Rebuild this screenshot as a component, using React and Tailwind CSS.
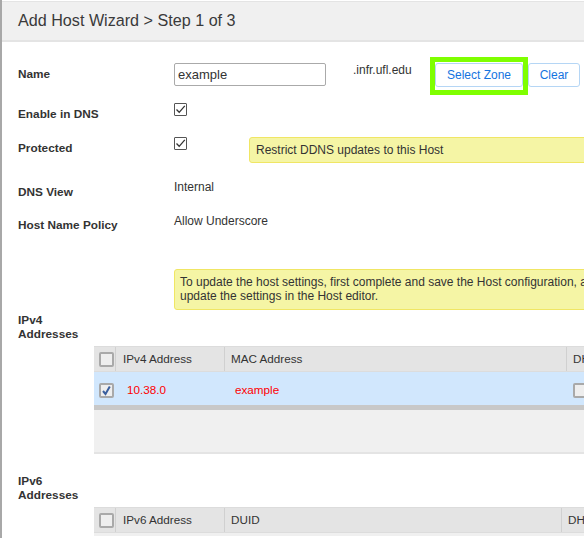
function Check() {
  return (
    <span className="w-[13px] h-[13px] border border-[#555] rounded-[1px] bg-white flex items-center justify-center">
      <svg width="11" height="11" viewBox="0 0 11 11" fill="none" stroke="#333" strokeWidth="1.3">
        <path d="M1.5 5.5 L4.2 8.3 L9.8 1.8" />
      </svg>
    </span>
  );
}

function TableBox({ checked }) {
  return (
    <span className="w-[15px] h-[15px] border-2 border-[#a9a9a9] rounded-[2px] bg-[#eeeeee] flex items-center justify-center shrink-0">
      {checked && (
        <svg width="11" height="11" viewBox="0 0 11 11" fill="none" stroke="#3a5f9e" strokeWidth="2">
          <path d="M2 6 L4.5 9 L8.8 1.5" />
        </svg>
      )}
    </span>
  );
}

function HeadRow({ first, second, third, secondW }) {
  return (
    <div className="flex h-[26px] bg-[#e4e4e4] border-y border-[#dcdcdc] text-[11.7px] text-[#333] items-stretch">
      <div className="w-[22px] pl-[5px] flex items-center border-r border-[#d0d0d0] shrink-0">
        <TableBox />
      </div>
      <div className="w-[109px] pl-[7px] flex items-center border-r border-[#d0d0d0] shrink-0">{first}</div>
      <div className={`${secondW} flex items-center pl-[6px] border-r border-[#d0d0d0] shrink-0`}>{second}</div>
      <div className="flex items-center pl-[6px] whitespace-nowrap">{third}</div>
    </div>
  );
}

export default function App() {
  return (
    <div className="w-[584px] h-[538px] overflow-hidden bg-white text-[#333] font-['Liberation_Sans',Arial,sans-serif] border-l-2 border-[#a8a8a8]">
      <div className="w-[700px]">
        {/* Header */}
        <div className="h-[41px] mt-px pb-[2px] bg-[#f0f0f0] border-t border-b-2 border-[#e4e4e4] pl-[16px] flex items-center text-[16.15px] text-[#3a3a3a]">
          Add Host Wizard &gt; Step 1 of 3
        </div>

        <div className="pl-[16px]">
          {/* Name */}
          <div className="flex mt-[15px] h-[38px]">
            <div className="w-[156px] text-[11.8px] font-bold pt-[10px] leading-[14px]">Name</div>
            <input
              readOnly
              value="example"
              className="w-[152px] h-[23px] mt-[6px] border border-[#aaa] rounded-[2px] px-[3px] pb-px text-[13px] text-[#333] outline-none"
            />
            <div className="w-[104px] pl-[27px] pt-[6px] text-[12px] leading-[14px] whitespace-nowrap">.infr.ufl.edu</div>
            <div className="w-[98px] h-[38px] border-[5px] border-[#7fff00] shrink-0">
              <button className="w-[88px] h-[24px] mt-px border border-[#b5d6f5] rounded-[3px] bg-white text-[12px] text-[#1474e0]">
                Select Zone
              </button>
            </div>
            <button className="w-[52px] h-[24px] mt-[6px] border border-[#b5d6f5] rounded-[3px] bg-white text-[12px] text-[#1474e0]">
              Clear
            </button>
          </div>

          {/* Enable in DNS */}
          <div className="flex mt-[8px] h-[27px]">
            <div className="w-[156px] text-[11.8px] font-bold pt-[4px] leading-[14px]">Enable in DNS</div>
            <Check />
          </div>

          {/* Protected */}
          <div className="flex mt-[7px] h-[27px]">
            <div className="w-[156px] text-[11.8px] font-bold pt-[4px] leading-[14px]">Protected</div>
            <Check />
            <div className="ml-[62px] w-[400px] h-[26px] bg-[#f5f5a5] border border-[#f0e664] rounded-[3px] pl-[6px] flex items-center text-[12px]">
              Restrict DDNS updates to this Host
            </div>
          </div>

          {/* DNS View */}
          <div className="flex mt-[16px] h-[34px]">
            <div className="w-[156px] text-[11.8px] font-bold pt-[5px] leading-[14px]">DNS View</div>
            <div className="text-[12px] leading-[14px]">Internal</div>
          </div>

          {/* Host Name Policy */}
          <div className="flex">
            <div className="w-[156px] text-[11.8px] font-bold pt-[4px] leading-[14px]">Host Name Policy</div>
            <div className="text-[12px] leading-[14px]">Allow Underscore</div>
          </div>

          {/* IPv4 */}
          <div className="flex mt-[37px]">
            <div className="w-[156px] text-[11.8px] font-bold pt-[44px] leading-[14px]">
              IPv4
              <br />
              Addresses
            </div>
            <div className="w-[500px] h-[41px] bg-[#f5f5a5] border border-[#f0e664] rounded-[3px] px-[5px] pt-[5px] text-[12px] leading-[14px] whitespace-nowrap">
              To update the host settings, first complete and save the Host configuration, and then
              <br />
              update the settings in the Host editor.
            </div>
          </div>

          <div className="ml-[76px] mt-[5px] w-[600px] h-[108px] bg-[#f0f0f0] border-b-2 border-[#e4e4e4]">
            <HeadRow first="IPv4 Address" second="MAC Address" third="DHCP" secondW="w-[342px]" />
            <div className="h-[33px] pt-[3px] bg-[#d1e7fd] flex items-center text-[11.7px] text-[#f00]">
              <div className="w-[22px] pl-[5px] shrink-0">
                <TableBox checked />
              </div>
              <div className="w-[109px] pl-[11px] shrink-0">10.38.0</div>
              <div className="w-[348px] pl-[10px] shrink-0">example</div>
              <TableBox />
            </div>
            <div className="h-[5px] bg-[#c8c8c8]" />
          </div>

          {/* IPv6 */}
          <div className="w-[156px] mt-[20px] text-[11.8px] font-bold leading-[14px]">
            IPv6
            <br />
            Addresses
          </div>
          <div className="ml-[76px] mt-[5px] w-[600px]">
            <HeadRow first="IPv6 Address" second="DUID" third="DHCP" secondW="w-[337px]" />
            <div className="h-[3px] bg-[#f0f0f0]" />
          </div>
        </div>
      </div>
    </div>
  );
}
